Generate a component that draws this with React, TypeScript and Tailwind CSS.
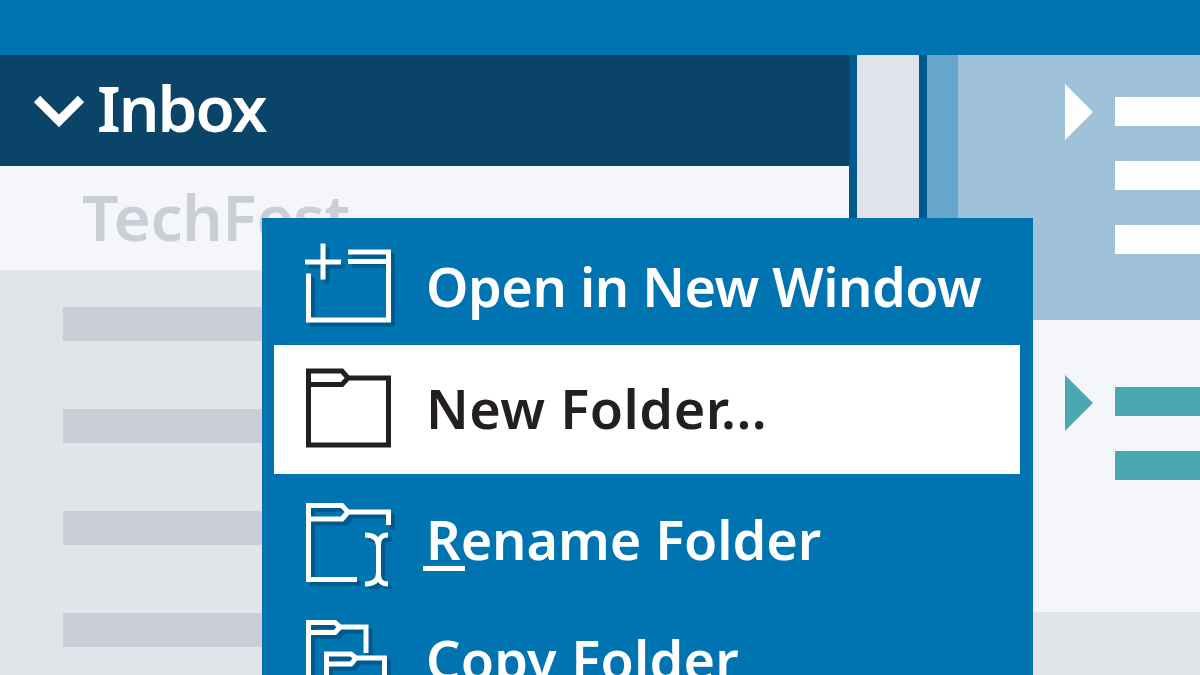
const fontStack = { fontFamily: '"Noto Sans", "Open Sans", sans-serif' };

function OpenWindowIcon() {
  const d = 'M308.5 273V319.5H388.5V251.5H348M348 261H388.5M305 261.5H341M323 243V279';
  return (
    <svg className="w-[100px] h-[90px] shrink-0" viewBox="300 236.5 100 90" fill="none" strokeWidth="5">
      <path d={d} stroke="#005a8e" transform="translate(4 4)" />
      <path d={d} stroke="#fff" />
    </svg>
  );
}

function NewFolderIcon() {
  return (
    <svg className="w-[100px] h-[90px] shrink-0" viewBox="300 364.5 100 90" fill="none" stroke="#231f20" strokeWidth="5">
      <path d="M308.5 370.5H342L348 377.5H388.5V444.5H308.5ZM308.5 384H342L348 377.5" />
    </svg>
  );
}

function RenameIcon() {
  const d =
    'M308.5 521V505.5H342L348 512H388.5V525M308.5 519H342L348 512M308.5 519V579.5H357M365 535C372 535 378.5 537 378.5 546V573C378.5 582 372 584 365 584M388 535C382 535 378.5 537 378.5 546M378.5 573C378.5 582 382 584 388 584';
  return (
    <svg className="w-[100px] h-[100px] shrink-0" viewBox="300 489 100 100" fill="none" strokeWidth="5">
      <path d={d} stroke="#005a8e" transform="translate(4 4)" />
      <path d={d} stroke="#fff" />
    </svg>
  );
}

function CopyIcon() {
  const d =
    'M308.5 680V622.5H335L340 627H366V653M308.5 632.5H335L340 627M326.5 680V654H351L356 658H384.5V680M326.5 664H351L356 658';
  return (
    <svg className="w-[100px] h-[60px] shrink-0" viewBox="300 615 100 60" fill="none" strokeWidth="5">
      <path d={d} stroke="#005a8e" transform="translate(4 4)" />
      <path d={d} stroke="#fff" />
    </svg>
  );
}

function Arrow({ color }: { color: string }) {
  return (
    <svg className="w-[28px] h-[56px] shrink-0" viewBox="0 0 28 56">
      <path d="M0 0L28 28L0 56Z" fill={color} />
    </svg>
  );
}

export default function App() {
  return (
    <div className="relative w-[1200px] h-[675px] overflow-hidden bg-[#e1e4e8]" style={fontStack}>
      <div className="h-[55px] bg-[#0073b1]" />
      <div className="flex h-[620px]">
        {/* message list */}
        <div className="w-[849px] shrink-0 flex flex-col">
          <div className="h-[111px] bg-[#0a4468] flex items-center pl-[34px] gap-[13px]">
            <svg className="w-[50px] h-[34px] shrink-0" viewBox="0 0 50 34" fill="none">
              <path d="M3 5L25 27L47 5" stroke="#fff" strokeWidth="9" />
            </svg>
            <span className="text-white text-[64px] leading-none font-semibold tracking-[-2px] -mt-[5px]">Inbox</span>
          </div>
          <div className="h-[104px] bg-[#f5f6fa] pl-[82px] pt-[19px]">
            <span className="text-[#cbced6] text-[64px] leading-none font-semibold tracking-[-0.5px]">TechFest</span>
          </div>
          <div className="flex-1 flex flex-col gap-[68px] pt-[37px] pl-[63px]">
            <div className="h-[34px] w-[400px] bg-[#cbced6]" />
            <div className="h-[34px] w-[400px] bg-[#cbced6]" />
            <div className="h-[34px] w-[400px] bg-[#cbced6]" />
            <div className="h-[34px] w-[400px] bg-[#cbced6]" />
          </div>
        </div>
        {/* scrollbar */}
        <div className="w-[70px] shrink-0 bg-[#e0e3e9] border-l-[8px] border-[#005a8e]" />
        <div className="w-[39px] shrink-0 bg-[#66a6cd] border-l-[8px] border-[#005a8e]" />
        {/* reading pane */}
        <div className="flex-1 flex flex-col">
          <div className="h-[265px] bg-[#9fc1da] flex items-start pl-[107px] pt-[29px] gap-[22px]">
            <Arrow color="#ffffff" />
            <div className="flex-1 flex flex-col gap-[35px] pt-[13px]">
              <div className="h-[29px] bg-white" />
              <div className="h-[29px] bg-white" />
              <div className="h-[29px] bg-white" />
            </div>
          </div>
          <div className="h-[292px] bg-[#f5f6fa] flex items-start pl-[107px] pt-[55px] gap-[22px]">
            <Arrow color="#4ba8b3" />
            <div className="flex-1 flex flex-col gap-[35px] pt-[12px]">
              <div className="h-[29px] bg-[#4ba8b3]" />
              <div className="h-[29px] bg-[#4ba8b3]" />
            </div>
          </div>
          <div className="flex-1 bg-[#e1e4e8]" />
        </div>
      </div>

      {/* context menu */}
      <div className="absolute left-[262px] top-[218px] w-[771px] h-[457px] bg-[#0073b1] pl-[12px] pr-[13px] text-[54px] leading-none font-semibold text-white overflow-hidden">
        <div className="h-[127px] flex items-center pl-[26px] gap-[26px]">
          <OpenWindowIcon />
          <span className="tracking-[-0.5px] mt-[8px]">Open in New Window</span>
        </div>
        <div className="h-[129px] bg-white text-[#231f20] flex items-center pl-[26px] gap-[26px]">
          <NewFolderIcon />
          <span className="tracking-[0.5px] mb-[4px]">New Folder...</span>
        </div>
        <div className="h-[130px] flex items-center pl-[26px] gap-[26px]">
          <RenameIcon />
          <span className="tracking-[-0.1px]">
            <span className="relative">
              R
              <span className="absolute left-[-3px] top-[64px] w-[42px] h-[5px] bg-white" />
            </span>
            ename Folder
          </span>
        </div>
        <div className="h-[71px] flex items-start pl-[26px] gap-[26px]">
          <div className="mt-[11px]">
            <CopyIcon />
          </div>
          <span className="tracking-[0.2px] mt-[28px]">Copy Folder</span>
        </div>
      </div>
    </div>
  );
}
